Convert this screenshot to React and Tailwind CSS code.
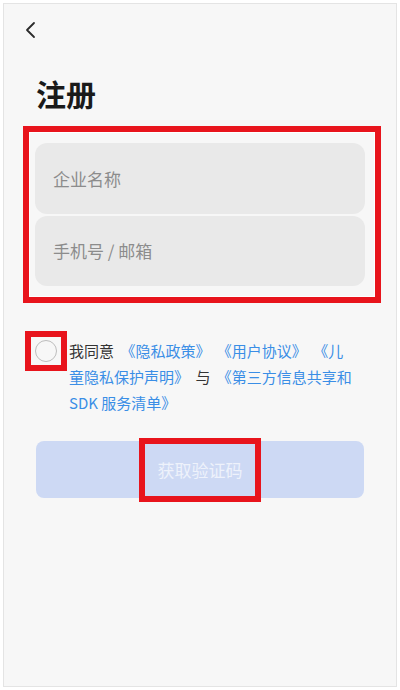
export default function App() {
    const font = { fontFamily: '"Noto Sans CJK SC", "Noto Sans", sans-serif' };
    return (
        <div className="w-[400px] h-[690px] bg-white p-[3px]" style={font}>
            <div className="h-full border border-[#e4e4e4] bg-[#f7f7f7] flex flex-col">
                <div className="pl-[19px] pt-[16px] h-[38px]">
                    <svg width="14" height="20" viewBox="0 0 14 20" fill="none">
                        <polyline points="11,3 4,10 11,17" stroke="#2b2b2b" strokeWidth="1.8" strokeLinecap="round" strokeLinejoin="round" />
                    </svg>
                </div>
                <h1 className="pl-[32px] mt-[36px] text-[30px] leading-[30px] font-bold text-[#1a1a1a]">注册</h1>
                <div className="ml-[19px] mt-[18px] w-[358px] h-[177px] border-[6px] border-[#e8141c]">
                    <div className="h-full border border-white pl-[5px] pr-[9px] pt-[10px] flex flex-col gap-[2px]">
                        <div className="h-[71px] rounded-[12px] bg-[#e9e9e9] flex items-center pl-[18px] text-[17px] text-[#8c8c8c]">企业名称</div>
                        <div className="h-[70px] rounded-[12px] bg-[#e9e9e9] flex items-center pl-[18px] text-[17px] text-[#8c8c8c]">手机号 / 邮箱</div>
                    </div>
                </div>
                <div className="flex mt-[28px] ml-[21px]">
                    <div className="w-[42px] h-[40px] shrink-0 border-[6px] border-[#e8141c] flex items-center justify-center">
                        <div className="w-[22px] h-[22px] rounded-full border-[1.5px] border-[#bdbdbd]" />
                    </div>
                    <p className="ml-[2px] mt-[7px] text-[15px] leading-[26px] text-[#333] [word-spacing:3px]">
                        我同意 <span className="text-[#3a8ee6]">《隐私政策》</span> <span className="text-[#3a8ee6]">《用户协议》</span> <span className="text-[#3a8ee6]">《儿</span>
                        <br />
                        <span className="text-[#3a8ee6]">童隐私保护声明》</span> 与 <span className="text-[#3a8ee6]">《第三方信息共享和</span>
                        <br />
                        <span className="text-[#3a8ee6] [word-spacing:0px]">SDK 服务清单》</span>
                    </p>
                </div>
                <button className="mx-[32px] mt-[25px] h-[57px] rounded-[8px] bg-[#cdd9f4] flex items-center justify-center">
                    <span className="w-[122px] h-[64px] border-[6px] border-[#e8141c] flex items-center justify-center text-[17px] text-[#eef2fb]">获取验证码</span>
                </button>
            </div>
        </div>
    );
}
